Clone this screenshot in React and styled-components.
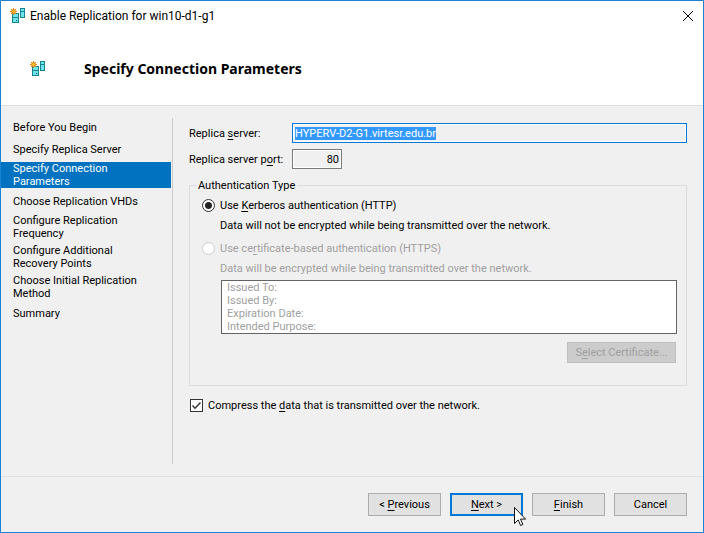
import React, { useEffect, useRef } from "react";
import styled, { createGlobalStyle, css } from "styled-components";

const GlobalStyle = createGlobalStyle`
  *, *::before, *::after { box-sizing: border-box; }
  body { margin: 0; }
  body, button, input {
    font-family: Roboto, "DejaVu Sans", sans-serif;
    font-size: 11px;
    line-height: 13px;
    color: #000;
  }
  u { text-underline-offset: 2px; text-decoration-thickness: 1px; text-decoration-skip-ink: none; }
`;

const Dialog = styled.div`
  display: flex;
  flex-direction: column;
  min-height: 100vh;
  background: #f0f0f0;
  border: 1px solid #1883d7;
`;

const TitleBar = styled.header`
  display: flex;
  align-items: center;
  gap: 4px;
  height: 30px;
  padding: 0 9px;
  background: #fff;
`;

const TitleText = styled.span`
  flex: 1;
  font-size: 12px;
  line-height: 16px;
`;

const CloseButton = styled.button`
  display: flex;
  padding: 0;
  border: 0;
  background: none;
`;

const Banner = styled.div`
  display: flex;
  align-items: center;
  gap: 38px;
  height: 75px;
  padding: 2px 29px 0;
  background: #fff;
  border-bottom: 1px solid #dfdfdf;
`;

const Heading = styled.h1`
  margin: 0;
  font-family: "Noto Sans", sans-serif;
  font-size: 14px;
  line-height: 18px;
`;

const Body = styled.div`
  flex: 1;
  display: flex;
  padding: 12px 16px 12px 0;
`;

const Steps = styled.nav`
  width: 172px;
  padding-right: 1px;
  border-right: 1px solid #cbcbcb;
`;

const StepList = styled.ol`
  display: flex;
  flex-direction: column;
  gap: 4px;
  margin: 0;
  padding: 0;
  list-style: none;
`;

const StepLink = styled.a`
  display: flex;
  align-items: center;
  min-height: 18px;
  padding: 0 32px 0 12px;
  color: #000;
  text-decoration: none;
  ${(p) => p.$active && css`background: #0072c0; color: #fff;`}
`;

const Content = styled.main`
  flex: 1;
  min-width: 0;
  display: flex;
  flex-direction: column;
  padding: 5px 0 0 16px;
`;

const Fields = styled.div`
  display: grid;
  grid-template-columns: 103px 1fr;
  align-items: center;
  row-gap: 6px;
`;

const TextBox = styled.input`
  width: ${(p) => p.$width || "100%"};
  height: 20px;
  padding: 0 2px;
  background: #f0f0f0;
  border: 1px solid ${(p) => (p.$focused ? "#0078d7" : "#7a7a7a")};
  box-shadow: inset 0 0 0 1px #fff;
  border-radius: 0;
  outline: none;
  text-align: ${(p) => p.$align || "left"};
  &::selection { background: #3399ff; color: #fff; }
`;

const Group = styled.fieldset`
  min-width: 0;
  margin: 10px 0 0;
  padding: 6px 9px 22px 12px;
  border: 1px solid #dcdcdc;
`;

const Legend = styled.legend`
  margin-left: -6px;
  padding: 0 2px;
`;

const Choice = styled.label`
  display: flex;
  align-items: center;
  gap: 5px;
  height: 14px;
  color: ${(p) => (p.$disabled ? "#a0a0a0" : "#000")};
`;

const Radio = styled.input`
  appearance: none;
  width: 13px;
  height: 13px;
  margin: 0;
  border: 1px solid #333;
  border-radius: 50%;
  background: #fff;
  &:checked { background: radial-gradient(circle, #222 3px, #fff 4px); }
  &:disabled { border-color: #ccc; }
`;

const Note = styled.p`
  margin: 0;
  padding: ${(p) => (p.$disabled ? "7px 0 5px 18px" : "7px 0 9px 18px")};
  color: ${(p) => (p.$disabled ? "#a0a0a0" : "#000")};
`;

const CertificateList = styled.ul`
  margin: 0 0 8px 19px;
  padding: 0 5px;
  list-style: none;
  color: #a0a0a0;
  background: #fff;
  border: 1px solid #646464;
`;

const GroupActions = styled.div`
  display: flex;
  justify-content: flex-end;
  padding-right: 1px;
`;

const Button = styled.button`
  height: ${(p) => (p.$compact ? "21px" : "23px")};
  width: ${(p) => (p.$compact ? "109px" : "73px")};
  padding: 0;
  border: 1px solid #adadad;
  background: #e1e1e1;
  ${(p) => p.$primary && css`border: 2px solid #0078d7;`}
  &:disabled { color: #a0a0a0; background: #ccc; border-color: #bfbfbf; }
`;

const CompressRow = styled.label`
  display: flex;
  align-items: center;
  gap: 5px;
  margin-top: 13px;
  padding-left: 1px;
`;

const CheckHolder = styled.span`
  display: grid;
  width: 13px;
  height: 13px;
  > * { grid-area: 1 / 1; }
  svg { pointer-events: none; visibility: hidden; }
  input:checked + svg { visibility: visible; }
`;

const CheckBox = styled.input`
  appearance: none;
  width: 13px;
  height: 13px;
  margin: 0;
  border: 1px solid #333;
  background: #fff;
`;

const Footer = styled.footer`
  display: flex;
  justify-content: flex-end;
  gap: 9px;
  padding: 16px 16px;
  border-top: 1px solid #dfdfdf;
`;

const PointerAnchor = styled.span`
  position: relative;
  display: flex;
`;

const Pointer = styled.svg`
  position: absolute;
  left: 64px;
  top: 14px;
  pointer-events: none;
`;

function ServerIcon() {
  return (
    <svg width="16" height="16" viewBox="0 0 16 16" shapeRendering="crispEdges" aria-hidden="true">
      <path d="M2 5h7v10H2z" fill="#18828c" />
      <path d="M3 6h5v3H3zM3 10h5v4H3z" fill="#6ee4ec" />
      <path d="M6 12h1v1H6z" fill="#0b4a52" />
      <path d="M10 0h5v10h-5z" fill="#18828c" />
      <path d="M11 1h3v2h-3zM11 4h3v5h-3z" fill="#6ee4ec" />
      <path d="M3 0h1v7H3zM0 3h7v1H0zM1 1h1v1H1zM5 1h1v1H5zM1 5h1v1H1zM5 5h1v1H5zM2 2h3v3H2z" fill="#e08a14" />
      <path d="M2 3h3v1H2zM3 2h1v3H3z" fill="#ffc02e" />
      <path d="M2 1h1v1H2zM4 1h1v1H4zM1 2h1v1H1zM5 2h1v1H5zM1 4h1v1H1zM5 4h1v1H5zM2 5h1v1H2zM4 5h1v1H4z" fill="#f5a623" fillOpacity="0.65" />
    </svg>
  );
}

const steps = [
  "Before You Begin",
  "Specify Replica Server",
  "Specify Connection Parameters",
  "Choose Replication VHDs",
  "Configure Replication Frequency",
  "Configure Additional Recovery Points",
  "Choose Initial Replication Method",
  "Summary",
];
const current = "Specify Connection Parameters";

export default function App() {
  const serverRef = useRef(null);
  useEffect(() => {
    serverRef.current.focus();
    serverRef.current.select();
  }, []);

  return (
    <>
      <GlobalStyle />
      <Dialog>
        <TitleBar>
          <ServerIcon />
          <TitleText>Enable Replication for win10-d1-g1</TitleText>
          <CloseButton aria-label="Close">
            <svg width="12" height="12" viewBox="0 0 12 12" stroke="#000" fill="none">
              <path d="M1 1l10 10M11 1L1 11" />
            </svg>
          </CloseButton>
        </TitleBar>
        <Banner>
          <ServerIcon />
          <Heading>Specify Connection Parameters</Heading>
        </Banner>
        <Body>
          <Steps>
            <StepList>
              {steps.map((step) => (
                <li key={step}>
                  <StepLink href="#" $active={step === current} aria-current={step === current ? "step" : undefined}>
                    {step}
                  </StepLink>
                </li>
              ))}
            </StepList>
          </Steps>
          <Content>
            <Fields>
              <label htmlFor="server">Replica <u>s</u>erver:</label>
              <TextBox id="server" ref={serverRef} $focused readOnly value="HYPERV-D2-G1.virtesr.edu.br" />
              <label htmlFor="port">Replica server p<u>o</u>rt:</label>
              <TextBox id="port" $width="50px" $align="right" readOnly value="80" />
            </Fields>
            <Group>
              <Legend>Authentication Type</Legend>
              <Choice>
                <Radio type="radio" name="auth" defaultChecked />
                <span>Use <u>K</u>erberos authentication (HTTP)</span>
              </Choice>
              <Note>Data will not be encrypted while being transmitted over the network.</Note>
              <Choice $disabled>
                <Radio type="radio" name="auth" disabled />
                <span>Use ce<u>r</u>tificate-based authentication (HTTPS)</span>
              </Choice>
              <Note $disabled>Data will be encrypted while being transmitted over the network.</Note>
              <CertificateList>
                <li>Issued To:</li>
                <li>Issued By:</li>
                <li>Expiration Date:</li>
                <li>Intended Purpose:</li>
              </CertificateList>
              <GroupActions>
                <Button $compact disabled>S<u>e</u>lect Certificate...</Button>
              </GroupActions>
            </Group>
            <CompressRow>
              <CheckHolder>
                <CheckBox type="checkbox" defaultChecked />
                <svg width="13" height="13" viewBox="0 0 13 13" fill="none" stroke="#333" strokeWidth="1.4">
                  <path d="M2.5 6.5l2.5 2.7L10.5 3.5" />
                </svg>
              </CheckHolder>
              <span>Compress the <u>d</u>ata that is transmitted over the network.</span>
            </CompressRow>
          </Content>
        </Body>
        <Footer>
          <Button>&lt; <u>P</u>revious</Button>
          <PointerAnchor>
            <Button $primary><u>N</u>ext &gt;</Button>
            <Pointer width="13" height="20" viewBox="0 0 13 20" aria-hidden="true">
              <path d="M.5.5v16l3.7-3.6 2.4 5.6 2.3-1-2.4-5.4h5.1z" fill="#fff" stroke="#111" />
            </Pointer>
          </PointerAnchor>
          <Button><u>F</u>inish</Button>
          <Button>Cancel</Button>
        </Footer>
      </Dialog>
    </>
  );
}
